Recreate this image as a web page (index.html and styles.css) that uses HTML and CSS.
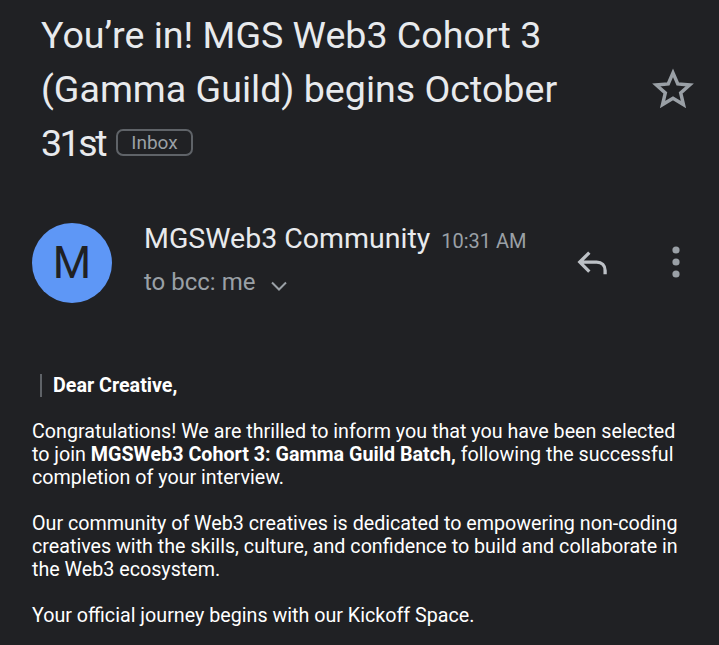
FILE: index.html
```html
<!DOCTYPE html>
<html>
<head>
<meta charset="utf-8">
<link rel="stylesheet" href="styles.css">
</head>
<body>
<div class="page">
  <div class="subject-row">
    <h1 class="subject">You’re in! MGS Web3 Cohort 3 (Gamma Guild) begins October <span class="tight">31st</span> <span class="badge">Inbox</span></h1>
    <div class="star">
      <svg width="44" height="44" viewBox="0 0 24 24"><path d="M12 3.2l2.6 6 6.5.6-4.9 4.3 1.5 6.4L12 17.1l-5.7 3.4 1.5-6.4-4.9-4.3 6.5-.6z" fill="none" stroke="#9aa0a6" stroke-width="1.9" stroke-linejoin="miter"/></svg>
    </div>
  </div>

  <div class="sender-row">
    <div class="avatar">M</div>
    <div class="sender-info">
      <div class="sender-line"><span class="sender-name">MGSWeb3 Community</span><span class="time">10:31 AM</span></div>
      <div class="to-line">to bcc: me
        <svg class="chev" width="20" height="12" viewBox="0 0 20 12"><path d="M3 2.5l7 7 7-7" fill="none" stroke="#9aa0a6" stroke-width="2"/></svg>
      </div>
    </div>
    <div class="actions">
      <svg class="reply" width="44" height="44" viewBox="0 0 24 24"><path d="M10 6.3L4.8 11.5 10 16.7M5 11.5h9c2.8 0 4.6 1.8 4.6 4.6v2" fill="none" stroke="#bdc1c6" stroke-width="1.8"/></svg>
      <svg class="more" width="12" height="36" viewBox="0 0 12 36"><circle cx="6" cy="5" r="3.6" fill="#9aa0a6"/><circle cx="6" cy="17" r="3.6" fill="#9aa0a6"/><circle cx="6" cy="29" r="3.6" fill="#9aa0a6"/></svg>
    </div>
  </div>

  <div class="body">
    <p class="greeting">Dear Creative,</p>
    <p>Congratulations! We are thrilled to inform you that you have been selected to join <b>MGSWeb3 Cohort 3: Gamma Guild Batch,</b> following the successful completion of your interview.</p>
    <p>Our community of Web3 creatives is dedicated to empowering non&#8209;coding creatives with the skills, culture, and confidence to build and collaborate in the Web3 ecosystem.</p>
    <p>Your official journey begins with our Kickoff Space.</p>
  </div>
</div>
</body>
</html>
```
FILE: styles.css
```css
html, body {
  margin: 0;
  padding: 0;
  background: #202124;
}
body {
  font-family: Roboto, "Noto Sans", sans-serif;
  color: #e8eaed;
  width: 719px;
  height: 645px;
  overflow: hidden;
}
.subject-row {
  display: flex;
  align-items: center;
  padding: 8px 0 0 41px;
}
.subject {
  margin: 0;
  font-weight: 400;
  font-size: 37.6px;
  line-height: 54px;
  width: 560px;
  color: #e8eaed;
  letter-spacing: 0;
}
.tight {
  letter-spacing: -2.5px;
}
.badge {
  display: inline-block;
  vertical-align: 7px;
  font-size: 19px;
  line-height: 23px;
  color: #9aa0a6;
  border: 2px solid #5f6368;
  border-radius: 7px;
  padding: 0 13px;
  margin-left: 2px;
}
.star {
  margin-left: 50px;
  margin-top: 0;
  display: flex;
}
.sender-row {
  display: flex;
  align-items: center;
  margin-top: 53px;
  padding-left: 32px;
}
.avatar {
  width: 80px;
  height: 80px;
  border-radius: 50%;
  background: #5e97f6;
  color: #202124;
  font-size: 44px;
  display: flex;
  align-items: center;
  justify-content: center;
  flex-shrink: 0;
}
.sender-info {
  margin-left: 32px;
  flex: 1;
  margin-top: -8px;
}
.sender-line {
  display: flex;
  align-items: baseline;
}
.sender-name {
  font-size: 28.5px;
  color: #e8eaed;
}
.time {
  font-size: 20px;
  color: #9aa0a6;
  margin-left: 11px;
}
.to-line {
  font-size: 24px;
  color: #9aa0a6;
  margin-top: 13px;
  display: flex;
  align-items: center;
}
.chev {
  margin-left: 14px;
  margin-top: 8px;
}
.actions {
  display: flex;
  align-items: center;
  padding-right: 37px;
  gap: 55px;
}
.body {
  padding: 71px 29px 0 32px;
  font-size: 19.7px;
  line-height: 23px;
  color: #ffffff;
}
.body p {
  margin: 0 0 23px 0;
}
.greeting {
  font-weight: 700;
  font-size: 19.7px;
  border-left: 2px solid #5f6368;
  padding-left: 11px;
  margin-left: 8px !important;
}
.body b {
  font-weight: 700;
}
```
